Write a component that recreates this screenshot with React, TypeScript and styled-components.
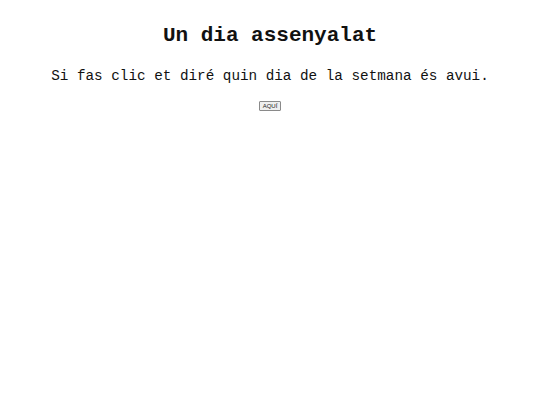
import styled, { createGlobalStyle } from "styled-components"

const GlobalStyle = createGlobalStyle`
    body {
        margin: 0;
        background: #ffffff;
        font-family: "Liberation Mono", "DejaVu Sans Mono", monospace;
    }
`

const Page = styled.div`
    display: flex;
    flex-direction: column;
    align-items: center;
    padding-top: 22px;
    color: #111;
`

const Title = styled.h1`
    font-size: 21px;
    font-weight: bold;
    margin: 0;
    line-height: 28px;
`

const Subtitle = styled.p`
    font-size: 14.3px;
    margin: 16px 0 0 0;
    line-height: 20px;
`

const Button = styled.button`
    margin-top: 15px;
    font-family: "Liberation Sans", Arial, sans-serif;
    font-size: 6px;
    padding: 1px 3px;
    background: #efefef;
    border: 1px solid #8a8a8a;
    border-radius: 1px;
    color: #222;
    line-height: 6px;
`

export default function App() {
    return (
        <>
            <GlobalStyle />
            <Page>
                <Title>Un dia assenyalat</Title>
                <Subtitle>Si fas clic et diré quin dia de la setmana és avui.</Subtitle>
                <Button>AQUÍ</Button>
            </Page>
        </>
    )
}
